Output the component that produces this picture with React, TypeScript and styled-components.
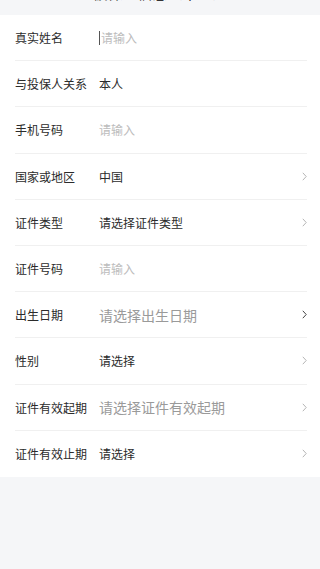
import React from 'react';
import styled, { createGlobalStyle } from 'styled-components';

const GlobalStyle = createGlobalStyle`
  html, body {
    margin: 0;
    padding: 0;
    background: #f5f6f8;
    font-family: "Noto Sans CJK SC", "Noto Sans", sans-serif;
  }
  * { box-sizing: border-box; }
`;

const Page = styled.div`
  width: 320px;
  min-height: 569px;
  background: #f5f6f8;
`;

const Header = styled.div`
  height: 15px;
  overflow: hidden;
  display: flex;
  justify-content: center;
`;

const Title = styled.div`
  margin-top: -17px;
  font-size: 15px;
  line-height: 20px;
  color: #333;
`;

const Card = styled.div`
  background: #fff;
  padding: 0 13px 0 15px;
`;

const Row = styled.div<{ $last?: boolean }>`
  height: 46.2px;
  display: flex;
  align-items: center;
  border-bottom: ${p => (p.$last ? 'none' : '1px solid #f0f0f0')};
`;

const Label = styled.div`
  width: 84px;
  flex-shrink: 0;
  font-size: 12px;
  color: #2b2b2b;
`;

type Tone = 'value' | 'placeholder' | 'hint';

const Value = styled.div<{ $tone: Tone; $big?: boolean }>`
  flex: 1;
  display: flex;
  align-items: center;
  font-size: ${p => (p.$big ? '14px' : '12px')};
  color: ${p =>
    p.$tone === 'value' ? '#2b2b2b' : p.$tone === 'hint' ? '#9a9a9a' : '#bcbcbc'};
`;

const Caret = styled.span`
  width: 1px;
  height: 14px;
  background: #555;
  margin-right: 1px;
`;

const Arrow = styled.svg<{ $dark?: boolean }>`
  width: 5px;
  height: 9px;
  flex-shrink: 0;
  color: ${p => (p.$dark ? '#444' : '#b5b5b5')};
`;

const Chevron = ({ dark }: { dark?: boolean }) => (
  <Arrow $dark={dark} viewBox="0 0 5 9">
    <path d="M0.8 0.8 L4.2 4.5 L0.8 8.2" fill="none" stroke="currentColor" strokeWidth="1" />
  </Arrow>
);

interface Field {
  label: string;
  value: string;
  tone: Tone;
  big?: boolean;
  arrow?: boolean;
  darkArrow?: boolean;
  caret?: boolean;
}

const fields: Field[] = [
  { label: '真实姓名', value: '请输入', tone: 'placeholder', caret: true },
  { label: '与投保人关系', value: '本人', tone: 'value' },
  { label: '手机号码', value: '请输入', tone: 'placeholder' },
  { label: '国家或地区', value: '中国', tone: 'value', arrow: true },
  { label: '证件类型', value: '请选择证件类型', tone: 'value', arrow: true },
  { label: '证件号码', value: '请输入', tone: 'placeholder' },
  { label: '出生日期', value: '请选择出生日期', tone: 'hint', big: true, arrow: true, darkArrow: true },
  { label: '性别', value: '请选择', tone: 'value', arrow: true },
  { label: '证件有效起期', value: '请选择证件有效起期', tone: 'hint', big: true, arrow: true },
  { label: '证件有效止期', value: '请选择', tone: 'value', arrow: true },
];

const App: React.FC = () => (
  <Page>
    <GlobalStyle />
    <Header>
      <Title>被保人信息（本人）</Title>
    </Header>
    <Card>
      {fields.map((f, i) => (
        <Row key={f.label} $last={i === fields.length - 1}>
          <Label>{f.label}</Label>
          <Value $tone={f.tone} $big={f.big}>
            {f.caret && <Caret />}
            {f.value}
          </Value>
          {f.arrow && <Chevron dark={f.darkArrow} />}
        </Row>
      ))}
    </Card>
  </Page>
);

export default App;
